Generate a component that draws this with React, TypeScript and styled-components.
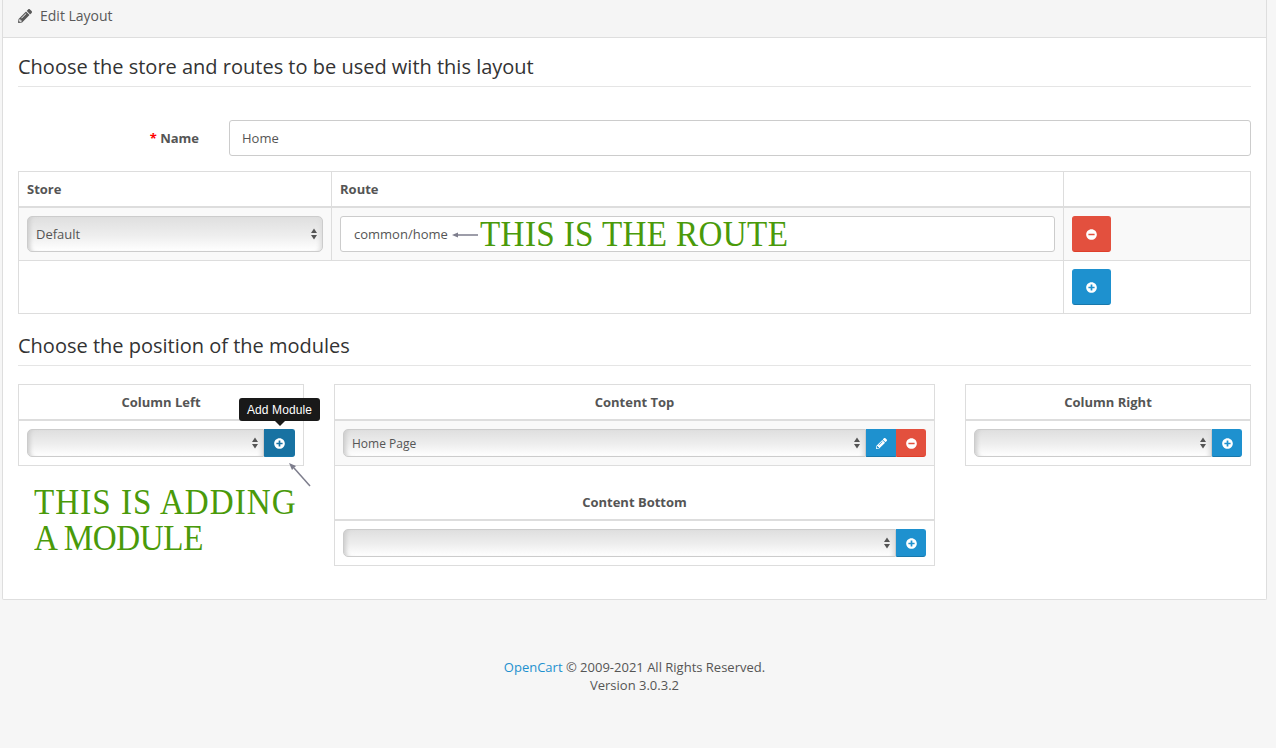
import styled, { createGlobalStyle } from "styled-components";
import { FaPencilAlt, FaPlusCircle, FaMinusCircle } from "react-icons/fa";

const GlobalStyle = createGlobalStyle`
    html, body {
        margin: 0;
        padding: 0;
        background: #f6f6f6;
        font-family: "Open Sans", sans-serif;
        font-size: 13px;
        color: #555;
    }
`

const Page = styled.div`
    width: 1276px;
    height: 748px;
    overflow: hidden;
    position: relative;
`

const Panel = styled.div`
    width: 1265px;
    height: 600px;
    margin-left: 2px;
    box-sizing: border-box;
    background: #fff;
    border: 1px solid #dedede;
    border-top: none;
    border-radius: 0 0 2px 2px;
`

const PanelHeading = styled.div`
    height: 38px;
    padding: 0 0 6px 15px;
    box-sizing: border-box;
    display: flex;
    align-items: center;
    gap: 8px;
    background: #f5f5f5;
    border-bottom: 1px solid #dedede;
    font-size: 14px;
    color: #595959;
    svg {
        width: 14px;
        height: 14px;
    }
`

const PanelBody = styled.div`
    padding: 0 15px;
`

const Legend = styled.div<{ $top: number }>`
    margin-top: ${(p) => p.$top}px;
    height: 38px;
    line-height: 38px;
    border-bottom: 1px solid #e5e5e5;
    font-size: 20px;
    color: #333;
`

const FormRow = styled.div`
    display: flex;
    align-items: center;
    margin-top: 33px;
`

const Label = styled.label`
    width: 181px;
    text-align: right;
    font-weight: 700;
    font-size: 13px;
    color: #555;
    span {
        color: #f00;
    }
`

const TextInput = styled.div`
    margin-left: 30px;
    flex: 1;
    height: 36px;
    box-sizing: border-box;
    border: 1px solid #ccc;
    border-radius: 3px;
    padding: 0 12px;
    display: flex;
    align-items: center;
    background: #fff;
    font-size: 13px;
    color: #555;
`

const RouteTable = styled.table`
    width: 100%;
    margin-top: 15px;
    border-collapse: collapse;
    table-layout: fixed;
    th, td {
        border: 1px solid #ddd;
        padding: 8px;
        text-align: left;
        vertical-align: top;
    }
    th {
        height: 35px;
        box-sizing: border-box;
        border-bottom-width: 2px;
        font-size: 13px;
        font-weight: 700;
        color: #555;
        vertical-align: middle;
    }
`

const StripedRow = styled.tr`
    background: #f9f9f9;
`

const SelectWrap = styled.div<{ $height: number; $joined?: boolean }>`
    position: relative;
    flex: 1;
    min-width: 0;
    height: ${(p) => p.$height}px;
    select {
        width: 100%;
        height: 100%;
        appearance: none;
        box-sizing: border-box;
        border: 1px solid #ccc;
        border-radius: ${(p) => (p.$joined ? "5px 0 0 5px" : "5px")};
        padding: 0 8px;
        background: linear-gradient(#dfdfdf, #eee 55%, #fff);
        box-shadow: inset 5px 0 4px -3px #ccc, inset -5px 0 4px -3px #ddd;
        font-family: inherit;
        font-size: ${(p) => (p.$height > 30 ? 13 : 12)}px;
        color: #555;
    }
    svg {
        position: absolute;
        right: 6px;
        top: 50%;
        margin-top: -6px;
    }
`

const IconButton = styled.button<{ $tone: "blue" | "red" | "dark" }>`
    display: flex;
    align-items: center;
    justify-content: center;
    padding: 0;
    box-sizing: border-box;
    color: #fff;
    background: ${(p) => (p.$tone === "red" ? "#e3503e" : p.$tone === "dark" ? "#1872a2" : "#1e91cf")};
    border: 1px solid ${(p) => (p.$tone === "red" ? "#e3503e" : p.$tone === "dark" ? "#1872a2" : "#1e91cf")};
    border-bottom-color: ${(p) => (p.$tone === "red" ? "#df3f2b" : "#1978ab")};
    svg {
        width: 11px;
        height: 11px;
    }
`

const BigButton = styled(IconButton)`
    width: 39px;
    height: 36px;
    border-radius: 3px;
`

const AddonButton = styled(IconButton)<{ $last?: boolean; $wide?: boolean }>`
    width: ${(p) => (p.$wide ? 30 : 31)}px;
    height: 28px;
    border-radius: ${(p) => (p.$last ? "0 3px 3px 0" : "0")};
`

const RouteField = styled(TextInput)`
    margin-left: 0;
    position: relative;
    padding-left: 13px;
`

const RouteNote = styled.span`
    position: absolute;
    left: 139px;
    top: -1px;
    font-family: "Liberation Serif", serif;
    font-size: 36px;
    line-height: 36px;
    letter-spacing: 0.4px;
    color: #4a9a0a;
    white-space: nowrap;
    transform: scaleX(0.92);
    transform-origin: left center;
`

const ArrowMark = styled.svg<{ $left: number; $top: number }>`
    position: absolute;
    left: ${(p) => p.$left}px;
    top: ${(p) => p.$top}px;
`

const ModuleGrid = styled.div`
    display: grid;
    grid-template-columns: 286px 601px 286px;
    gap: 30px;
    margin-top: 18px;
`

const ModuleColumn = styled.div`
    position: relative;
`

const ModuleTable = styled.div`
    border: 1px solid #ddd;
    border-top: none;
    &:first-child {
        border-top: 1px solid #ddd;
    }
`

const ModuleHeading = styled.div<{ $tall?: boolean }>`
    height: ${(p) => (p.$tall ? 55 : 36)}px;
    padding-top: ${(p) => (p.$tall ? 19 : 0)}px;
    box-sizing: border-box;
    border-bottom: 2px solid #ddd;
    display: flex;
    align-items: center;
    justify-content: center;
    font-size: 13px;
    font-weight: 700;
    color: #555;
`

const ModuleRow = styled.div<{ $striped?: boolean }>`
    display: flex;
    padding: 8px;
    height: 44px;
    box-sizing: border-box;
    background: ${(p) => (p.$striped ? "#f9f9f9" : "#fff")};
`

const Tooltip = styled.div`
    position: absolute;
    left: 221px;
    top: 14px;
    width: 81px;
    height: 23px;
    border-radius: 3px;
    background: #191919;
    color: #fff;
    font-family: "Liberation Sans", sans-serif;
    font-size: 12px;
    letter-spacing: 0.1px;
    display: flex;
    align-items: center;
    justify-content: center;
    &::after {
        content: "";
        position: absolute;
        left: 36px;
        bottom: -5px;
        border: 5px solid transparent;
        border-bottom: none;
        border-top-color: #191919;
    }
`

const ModuleNote = styled.div`
    position: absolute;
    left: 16px;
    top: 100px;
    font-family: "Liberation Serif", serif;
    font-size: 36px;
    line-height: 36px;
    color: #4a9a0a;
    white-space: nowrap;
    transform: scaleX(0.92);
    transform-origin: left top;
`

const NoteLine = styled.div<{ $spacing: number }>`
    letter-spacing: ${(p) => p.$spacing}px;
`

const Footer = styled.footer`
    text-align: center;
    width: 1269px;
    margin-top: 58px;
    font-size: 13px;
    line-height: 18px;
    color: #555;
    a {
        color: #1e91cf;
        text-decoration: none;
    }
`

const Stepper = () => (
    <svg width="6" height="12" viewBox="0 0 6 12">
        <path d="M3 0.5 L6 5 L0 5 Z M0 7 L6 7 L3 11.5 Z" fill="#555" />
    </svg>
)

const Select = ({ value, height, joined }: { value?: string; height: number; joined?: boolean }) => (
    <SelectWrap $height={height} $joined={joined}>
        <select defaultValue={value ?? ""}>
            <option value={value ?? ""}>{value ?? ""}</option>
        </select>
        <Stepper />
    </SelectWrap>
)

export default function App() {
    return (
        <Page>
            <GlobalStyle />
            <Panel>
                <PanelHeading>
                    <FaPencilAlt />
                    Edit Layout
                </PanelHeading>
                <PanelBody>
                    <Legend $top={10}>Choose the store and routes to be used with this layout</Legend>
                    <FormRow>
                        <Label>
                            <span>*</span> Name
                        </Label>
                        <TextInput>Home</TextInput>
                    </FormRow>
                    <RouteTable>
                        <colgroup>
                            <col style={{ width: 313 }} />
                            <col />
                            <col style={{ width: 187 }} />
                        </colgroup>
                        <thead>
                            <tr>
                                <th>Store</th>
                                <th>Route</th>
                                <th></th>
                            </tr>
                        </thead>
                        <tbody>
                            <StripedRow>
                                <td>
                                    <Select value="Default" height={36} />
                                </td>
                                <td>
                                    <RouteField>
                                        common/home
                                        <ArrowMark $left={110} $top={13} width="28" height="10" viewBox="0 0 28 10">
                                            <path d="M27 5 H6" stroke="#7d7d8c" strokeWidth="1.5" fill="none" />
                                            <path d="M1 5 L7 2.5 L7 7.5 Z" fill="#7d7d8c" />
                                        </ArrowMark>
                                        <RouteNote>THIS IS THE ROUTE</RouteNote>
                                    </RouteField>
                                </td>
                                <td>
                                    <BigButton $tone="red">
                                        <FaMinusCircle />
                                    </BigButton>
                                </td>
                            </StripedRow>
                            <tr>
                                <td colSpan={2}></td>
                                <td>
                                    <BigButton $tone="blue">
                                        <FaPlusCircle />
                                    </BigButton>
                                </td>
                            </tr>
                        </tbody>
                    </RouteTable>
                    <Legend $top={13}>Choose the position of the modules</Legend>
                    <ModuleGrid>
                        <ModuleColumn>
                            <ModuleTable>
                                <ModuleHeading>Column Left</ModuleHeading>
                                <ModuleRow>
                                    <Select height={28} joined />
                                    <AddonButton $tone="dark" $last>
                                        <FaPlusCircle />
                                    </AddonButton>
                                </ModuleRow>
                            </ModuleTable>
                            <Tooltip>Add Module</Tooltip>
                            <ArrowMark $left={270} $top={78} width="26" height="26" viewBox="0 0 26 26">
                                <path d="M22 24 L6 6" stroke="#7d7d8c" strokeWidth="1.5" fill="none" />
                                <path d="M1 1 L8 4 L4 8 Z" fill="#7d7d8c" />
                            </ArrowMark>
                            <ModuleNote>
                                <NoteLine $spacing={1.1}>THIS IS ADDING</NoteLine>
                                <NoteLine $spacing={-0.4}>A MODULE</NoteLine>
                            </ModuleNote>
                        </ModuleColumn>
                        <ModuleColumn>
                            <ModuleTable>
                                <ModuleHeading>Content Top</ModuleHeading>
                                <ModuleRow $striped>
                                    <Select value="Home Page" height={28} joined />
                                    <AddonButton $tone="blue" $wide>
                                        <FaPencilAlt />
                                    </AddonButton>
                                    <AddonButton $tone="red" $last $wide>
                                        <FaMinusCircle />
                                    </AddonButton>
                                </ModuleRow>
                            </ModuleTable>
                            <ModuleTable>
                                <ModuleHeading $tall>Content Bottom</ModuleHeading>
                                <ModuleRow>
                                    <Select height={28} joined />
                                    <AddonButton $tone="blue" $last $wide>
                                        <FaPlusCircle />
                                    </AddonButton>
                                </ModuleRow>
                            </ModuleTable>
                        </ModuleColumn>
                        <ModuleColumn>
                            <ModuleTable>
                                <ModuleHeading>Column Right</ModuleHeading>
                                <ModuleRow>
                                    <Select height={28} joined />
                                    <AddonButton $tone="blue" $last $wide>
                                        <FaPlusCircle />
                                    </AddonButton>
                                </ModuleRow>
                            </ModuleTable>
                        </ModuleColumn>
                    </ModuleGrid>
                </PanelBody>
            </Panel>
            <Footer>
                <a href="#">OpenCart</a> © 2009-2021 All Rights Reserved.
                <br />
                Version 3.0.3.2
            </Footer>
        </Page>
    )
}
